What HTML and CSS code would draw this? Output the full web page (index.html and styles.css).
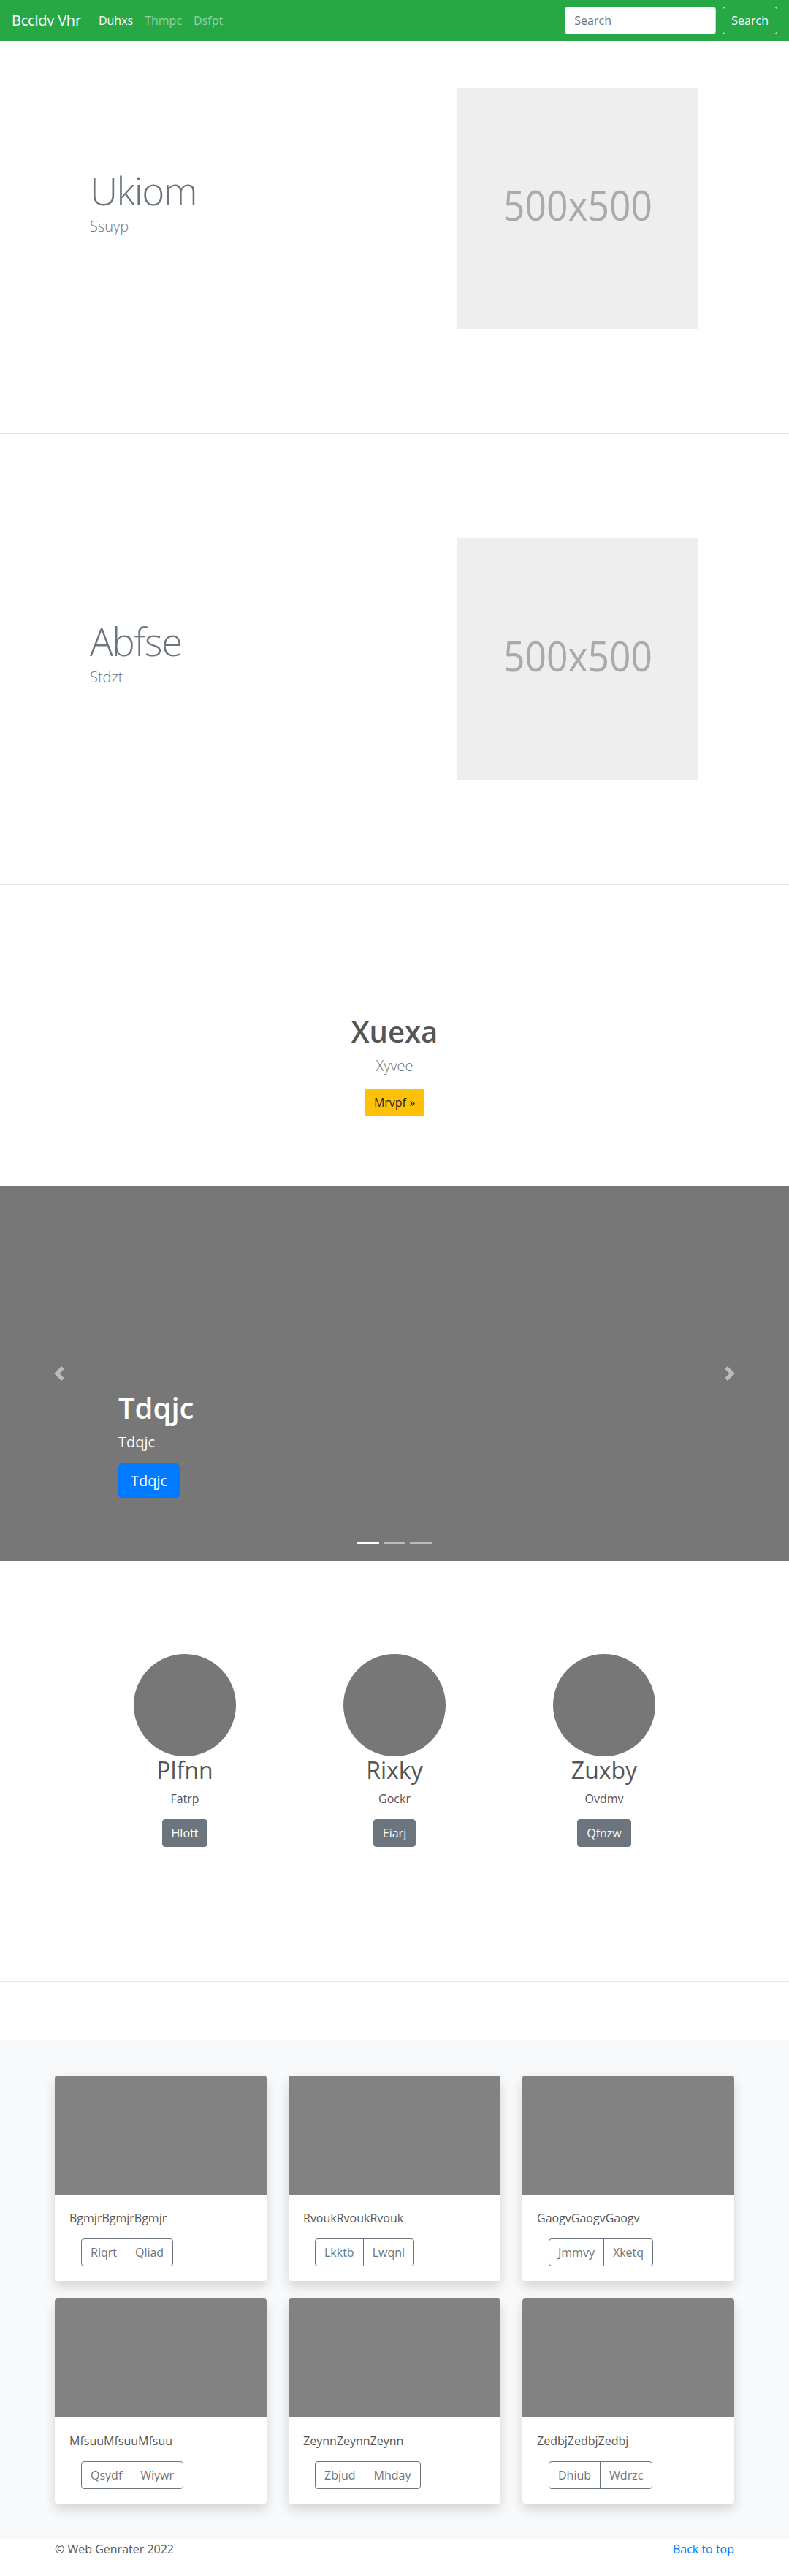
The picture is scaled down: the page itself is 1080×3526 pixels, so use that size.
FILE: index.html
```html
<!DOCTYPE html>
<html lang="en">
<head>
<meta charset="utf-8">
<title>Bccldv Vhr</title>
<link rel="stylesheet" href="styles.css">
</head>
<body>
<nav class="navbar">
  <a class="brand" href="#">Bccldv Vhr</a>
  <ul class="nav">
    <li><a class="nav-link active" href="#">Duhxs</a></li>
    <li><a class="nav-link" href="#">Thmpc</a></li>
    <li><a class="nav-link" href="#">Dsfpt</a></li>
  </ul>
  <form class="search">
    <input class="search-input" type="text" placeholder="Search">
    <button class="search-btn" type="button">Search</button>
  </form>
</nav>

<section class="feature feature-first">
  <div class="feature-row">
    <div class="feature-text">
      <h1 class="display">Ukiom</h1>
      <p class="lead">Ssuyp</p>
    </div>
    <div class="feature-media">
      <svg class="placeholder" width="330" height="330" viewBox="0 0 330 330"><rect width="330" height="330" fill="#eee"/><text x="165" y="165" dy=".3em" text-anchor="middle" fill="#aaa" font-size="56" font-family="Open Sans, sans-serif" textLength="204" lengthAdjust="spacingAndGlyphs">500x500</text></svg>
    </div>
  </div>
</section>

<section class="feature feature-second">
  <div class="feature-row">
    <div class="feature-text">
      <h1 class="display">Abfse</h1>
      <p class="lead">Stdzt</p>
    </div>
    <div class="feature-media">
      <svg class="placeholder" width="330" height="330" viewBox="0 0 330 330"><rect width="330" height="330" fill="#eee"/><text x="165" y="165" dy=".3em" text-anchor="middle" fill="#aaa" font-size="56" font-family="Open Sans, sans-serif" textLength="204" lengthAdjust="spacingAndGlyphs">500x500</text></svg>
    </div>
  </div>
</section>

<section class="intro">
  <h1 class="intro-title">Xuexa</h1>
  <p class="lead intro-lead">Xyvee</p>
  <a class="btn btn-warning" href="#">Mrvpf &raquo;</a>
</section>

<section class="carousel">
  <a class="carousel-control prev" href="#"><svg width="20" height="20" viewBox="0 0 8 8"><path fill="#fff" d="M5.25 0l-4 4 4 4 1.5-1.5L4.25 4l2.5-2.5L5.25 0z"/></svg></a>
  <a class="carousel-control next" href="#"><svg width="20" height="20" viewBox="0 0 8 8"><path fill="#fff" d="M2.75 0l-1.5 1.5L3.75 4l-2.5 2.5L2.75 8l4-4-4-4z"/></svg></a>
  <div class="carousel-caption">
    <h1 class="caption-title">Tdqjc</h1>
    <p class="caption-text">Tdqjc</p>
    <p class="caption-action"><a class="btn btn-lg btn-primary" href="#">Tdqjc</a></p>
  </div>
  <ol class="indicators">
    <li class="indicator active"></li>
    <li class="indicator"></li>
    <li class="indicator"></li>
  </ol>
</section>

<section class="marketing">
  <div class="marketing-row">
    <div class="person">
      <svg class="avatar" width="140" height="140" viewBox="0 0 140 140"><circle cx="70" cy="70" r="70" fill="#777"/></svg>
      <h2 class="person-name">Plfnn</h2>
      <p class="person-text">Fatrp</p>
      <a class="btn btn-secondary" href="#">Hlott</a>
    </div>
    <div class="person">
      <svg class="avatar" width="140" height="140" viewBox="0 0 140 140"><circle cx="70" cy="70" r="70" fill="#777"/></svg>
      <h2 class="person-name">Rixky</h2>
      <p class="person-text">Gockr</p>
      <a class="btn btn-secondary" href="#">Eiarj</a>
    </div>
    <div class="person">
      <svg class="avatar" width="140" height="140" viewBox="0 0 140 140"><circle cx="70" cy="70" r="70" fill="#777"/></svg>
      <h2 class="person-name">Zuxby</h2>
      <p class="person-text">Ovdmv</p>
      <a class="btn btn-secondary" href="#">Qfnzw</a>
    </div>
  </div>
</section>

<div class="spacer"></div>

<section class="album">
  <div class="album-grid">
    <div class="card">
      <div class="card-img"></div>
      <div class="card-body">
        <p class="card-text">BgmjrBgmjrBgmjr</p>
        <div class="btn-group"><button class="btn btn-outline">Rlqrt</button><button class="btn btn-outline">Qliad</button></div>
      </div>
    </div>
    <div class="card">
      <div class="card-img"></div>
      <div class="card-body">
        <p class="card-text">RvoukRvoukRvouk</p>
        <div class="btn-group"><button class="btn btn-outline">Lkktb</button><button class="btn btn-outline">Lwqnl</button></div>
      </div>
    </div>
    <div class="card">
      <div class="card-img"></div>
      <div class="card-body">
        <p class="card-text">GaogvGaogvGaogv</p>
        <div class="btn-group"><button class="btn btn-outline">Jmmvy</button><button class="btn btn-outline">Xketq</button></div>
      </div>
    </div>
    <div class="card">
      <div class="card-img"></div>
      <div class="card-body">
        <p class="card-text">MfsuuMfsuuMfsuu</p>
        <div class="btn-group"><button class="btn btn-outline">Qsydf</button><button class="btn btn-outline">Wiywr</button></div>
      </div>
    </div>
    <div class="card">
      <div class="card-img"></div>
      <div class="card-body">
        <p class="card-text">ZeynnZeynnZeynn</p>
        <div class="btn-group"><button class="btn btn-outline">Zbjud</button><button class="btn btn-outline">Mhday</button></div>
      </div>
    </div>
    <div class="card">
      <div class="card-img"></div>
      <div class="card-body">
        <p class="card-text">ZedbjZedbjZedbj</p>
        <div class="btn-group"><button class="btn btn-outline">Dhiub</button><button class="btn btn-outline">Wdrzc</button></div>
      </div>
    </div>
  </div>
</section>

<footer class="footer">
  <p class="footer-copy">&copy; Web Genrater 2022</p>
  <a class="footer-link" href="#">Back to top</a>
</footer>
</body>
</html>
```

FILE: styles.css
```css
* { box-sizing: border-box; }

body {
  margin: 0;
  font-family: "Open Sans", "Noto Sans", sans-serif;
  font-size: 16px;
  line-height: 1.5;
  color: #212529;
  background: #fff;
}

h1, h2, p { margin-top: 0; }
a { text-decoration: none; }

/* Navbar */
.navbar {
  height: 56px;
  background: #28a745;
  display: flex;
  align-items: center;
  padding: 0 16px;
}
.brand {
  color: #fff;
  font-size: 20px;
  line-height: 30px;
  margin-right: 16px;
  letter-spacing: -0.2px;
}
.nav {
  list-style: none;
  margin: 0;
  padding: 0;
  display: flex;
}
.nav-link {
  display: block;
  padding: 8px;
  color: rgba(255, 255, 255, 0.5);
}
.nav-link.active { color: #fff; }
.search {
  margin-left: auto;
  display: flex;
  align-items: center;
}
.search-input {
  width: 207px;
  height: 38px;
  padding: 6px 12px;
  font: inherit;
  font-size: 16px;
  color: #495057;
  border: 1px solid #ced4da;
  border-radius: 4px;
  margin-right: 9px;
}
.search-input::placeholder { color: #6c757d; }
.search-btn {
  height: 38px;
  padding: 6px 11px;
  font: inherit;
  font-size: 16px;
  color: #fff;
  background: transparent;
  border: 1px solid #f8f9fa;
  border-radius: 4px;
}

/* Featurettes */
.feature { border-bottom: 1px solid #e6e6e6; }
.feature-first { padding: 64px 0 143px; }
.feature-second { padding: 143px 0; }
.feature-row {
  width: 960px;
  margin: 0 auto;
  display: flex;
  align-items: center;
}
.feature-text {
  flex: 1;
  padding-left: 63px;
}
.display {
  font-size: 53px;
  font-weight: 300;
  line-height: 64px;
  letter-spacing: -1.5px;
  color: #6c757d;
  margin-bottom: 2px;
}
.lead {
  font-size: 20px;
  font-weight: 300;
  color: #6c757d;
  margin-bottom: 16px;
}
.feature-media {
  padding-right: 64px;
}
.placeholder { display: block; }

/* Intro */
.intro {
  text-align: center;
  padding: 177px 0 96px;
}
.intro-title {
  font-size: 40px;
  font-weight: 600;
  line-height: 1.2;
  color: #555;
  margin-bottom: 8px;
}
.intro-lead { margin-bottom: 16px; }

/* Buttons */
.btn {
  display: inline-block;
  font-family: inherit;
  font-size: 16px;
  line-height: 24px;
  padding: 6px 12px;
  border: 1px solid transparent;
  border-radius: 4px;
  cursor: pointer;
}
.btn-warning { background: #ffc107; border-color: #ffc107; color: #212529; }
.btn-primary { background: #007bff; border-color: #007bff; color: #fff; }
.btn-secondary { background: #6c757d; border-color: #6c757d; color: #fff; }
.btn-lg {
  font-size: 20px;
  line-height: 30px;
  padding: 8px 16px;
  border-radius: 5px;
}

/* Carousel */
.carousel {
  position: relative;
  height: 512px;
  background: #777;
}
.carousel-control {
  position: absolute;
  top: 0;
  bottom: 0;
  width: 162px;
  display: flex;
  align-items: center;
  justify-content: center;
  opacity: 0.5;
}
.carousel-control.prev { left: 0; }
.carousel-control.next { right: 0; }
.carousel-caption {
  position: absolute;
  left: 162px;
  right: 162px;
  bottom: 48px;
  padding: 20px 0;
  color: #fff;
}
.caption-title {
  font-size: 40px;
  font-weight: 600;
  line-height: 1.2;
  margin-bottom: 8px;
}
.caption-text {
  font-size: 20px;
  line-height: 30px;
  margin-bottom: 14px;
}
.caption-action {
  margin-bottom: 17px;
  display: flex;
}
.indicators {
  position: absolute;
  left: 0;
  right: 0;
  bottom: 22px;
  margin: 0;
  padding: 0;
  list-style: none;
  display: flex;
  justify-content: center;
  gap: 6px;
}
.indicator {
  width: 30px;
  height: 3px;
  background: rgba(255, 255, 255, 0.5);
}
.indicator.active { background: #fff; }

/* Marketing */
.marketing {
  padding: 128px 0 184px;
  border-bottom: 1px solid #e6e6e6;
}
.marketing-row {
  width: 861px;
  margin: 0 auto;
  display: grid;
  grid-template-columns: repeat(3, 1fr);
}
.person { text-align: center; color: #555; }
.avatar { display: block; margin: 0 auto; }
.person-name {
  font-size: 32px;
  font-weight: 400;
  line-height: 1.2;
  margin-bottom: 8px;
}
.person-text { margin-bottom: 16px; }

.spacer { height: 80px; }

/* Album */
.album {
  background: #f8f9fa;
  padding: 48px 0;
}
.album-grid {
  width: 930px;
  margin: 0 auto;
  display: grid;
  grid-template-columns: repeat(3, 290px);
  column-gap: 30px;
  row-gap: 24px;
}
.card {
  background: #fff;
  border-radius: 4px;
  overflow: hidden;
  box-shadow: 0 8px 16px rgba(0, 0, 0, 0.15);
}
.card-img {
  height: 163px;
  background: #828282;
}
.card-body { padding: 20px; }
.card-text {
  color: #555;
  margin-bottom: 16px;
}
.btn-group {
  display: inline-flex;
  margin-left: 16px;
}
.btn-outline {
  background: transparent;
  color: #6c757d;
  border-color: #6c757d;
}
.btn-group .btn-outline:first-child {
  border-top-right-radius: 0;
  border-bottom-right-radius: 0;
}
.btn-group .btn-outline:last-child {
  border-top-left-radius: 0;
  border-bottom-left-radius: 0;
  margin-left: -1px;
}

/* Footer */
.footer {
  width: 930px;
  margin: 0 auto;
  display: flex;
  justify-content: space-between;
  padding-top: 2px;
}
.footer-copy {
  margin: 0;
  color: #555;
}
.footer-link { color: #007bff; }
```
